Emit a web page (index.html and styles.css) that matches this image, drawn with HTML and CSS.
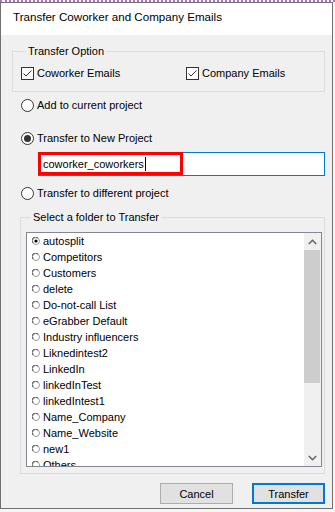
FILE: index.html
```html
<!DOCTYPE html>
<html>
<head>
	<meta charset="utf-8" />
	<title>Transfer Coworker and Company Emails</title>
	<link rel="stylesheet" href="styles.css">
</head>
<body>
<div class="window">
	<div class="titlebar">Transfer Coworker and Company Emails</div>
	<div class="content">
		<div class="group options">
			<div class="group-title">Transfer Option</div>
			<div class="check-row">
				<label class="check first">
					<svg class="box" width="13" height="13" viewBox="0 0 13 13"><rect x="0.5" y="0.5" width="12" height="12" fill="#fff" stroke="#333"/><path d="M2.5 6.5 L5 9 L10.5 3.5" fill="none" stroke="#333" stroke-width="1"/></svg>
					Coworker Emails
				</label>
				<label class="check">
					<svg class="box" width="13" height="13" viewBox="0 0 13 13"><rect x="0.5" y="0.5" width="12" height="12" fill="#fff" stroke="#333"/><path d="M2.5 6.5 L5 9 L10.5 3.5" fill="none" stroke="#333" stroke-width="1"/></svg>
					Company Emails
				</label>
			</div>
		</div>

		<div class="radio r-add">
			<svg width="13" height="13" viewBox="0 0 13 13"><circle cx="6.5" cy="6.5" r="6" fill="#fff" stroke="#333"/></svg>
			Add to current project
		</div>
		<div class="radio r-new">
			<svg width="13" height="13" viewBox="0 0 13 13"><circle cx="6.5" cy="6.5" r="6" fill="#fff" stroke="#333"/><circle cx="6.5" cy="6.5" r="3.5" fill="#333"/></svg>
			Transfer to New Project
		</div>
		<div class="textbox">
			<span class="value">coworker_coworkers</span><span class="caret"></span>
			<span class="mark"></span>
		</div>
		<div class="radio r-diff">
			<svg width="13" height="13" viewBox="0 0 13 13"><circle cx="6.5" cy="6.5" r="6" fill="#fff" stroke="#333"/></svg>
			Transfer to different project
		</div>

		<div class="group folders">
			<div class="group-title">Select a folder to Transfer</div>
			<div class="listbox">
				<ul class="items">
					<li><svg width="8" height="8" viewBox="0 0 8 8"><circle cx="4" cy="4" r="3.5" fill="#fff" stroke="#9a9a9a"/><path d="M1 6 A3.5 3.5 0 0 1 6 1" fill="none" stroke="#555"/><circle cx="4" cy="4" r="1.6" fill="#000"/></svg>autosplit</li>
					<li><svg width="8" height="8" viewBox="0 0 8 8"><circle cx="4" cy="4" r="3.5" fill="#fff" stroke="#9a9a9a"/><path d="M1 6 A3.5 3.5 0 0 1 6 1" fill="none" stroke="#555"/></svg>Competitors</li>
					<li><svg width="8" height="8" viewBox="0 0 8 8"><circle cx="4" cy="4" r="3.5" fill="#fff" stroke="#9a9a9a"/><path d="M1 6 A3.5 3.5 0 0 1 6 1" fill="none" stroke="#555"/></svg>Customers</li>
					<li><svg width="8" height="8" viewBox="0 0 8 8"><circle cx="4" cy="4" r="3.5" fill="#fff" stroke="#9a9a9a"/><path d="M1 6 A3.5 3.5 0 0 1 6 1" fill="none" stroke="#555"/></svg>delete</li>
					<li><svg width="8" height="8" viewBox="0 0 8 8"><circle cx="4" cy="4" r="3.5" fill="#fff" stroke="#9a9a9a"/><path d="M1 6 A3.5 3.5 0 0 1 6 1" fill="none" stroke="#555"/></svg>Do-not-call List</li>
					<li><svg width="8" height="8" viewBox="0 0 8 8"><circle cx="4" cy="4" r="3.5" fill="#fff" stroke="#9a9a9a"/><path d="M1 6 A3.5 3.5 0 0 1 6 1" fill="none" stroke="#555"/></svg>eGrabber Default</li>
					<li><svg width="8" height="8" viewBox="0 0 8 8"><circle cx="4" cy="4" r="3.5" fill="#fff" stroke="#9a9a9a"/><path d="M1 6 A3.5 3.5 0 0 1 6 1" fill="none" stroke="#555"/></svg>Industry influencers</li>
					<li><svg width="8" height="8" viewBox="0 0 8 8"><circle cx="4" cy="4" r="3.5" fill="#fff" stroke="#9a9a9a"/><path d="M1 6 A3.5 3.5 0 0 1 6 1" fill="none" stroke="#555"/></svg>Liknedintest2</li>
					<li><svg width="8" height="8" viewBox="0 0 8 8"><circle cx="4" cy="4" r="3.5" fill="#fff" stroke="#9a9a9a"/><path d="M1 6 A3.5 3.5 0 0 1 6 1" fill="none" stroke="#555"/></svg>LinkedIn</li>
					<li><svg width="8" height="8" viewBox="0 0 8 8"><circle cx="4" cy="4" r="3.5" fill="#fff" stroke="#9a9a9a"/><path d="M1 6 A3.5 3.5 0 0 1 6 1" fill="none" stroke="#555"/></svg>linkedInTest</li>
					<li><svg width="8" height="8" viewBox="0 0 8 8"><circle cx="4" cy="4" r="3.5" fill="#fff" stroke="#9a9a9a"/><path d="M1 6 A3.5 3.5 0 0 1 6 1" fill="none" stroke="#555"/></svg>linkedIntest1</li>
					<li><svg width="8" height="8" viewBox="0 0 8 8"><circle cx="4" cy="4" r="3.5" fill="#fff" stroke="#9a9a9a"/><path d="M1 6 A3.5 3.5 0 0 1 6 1" fill="none" stroke="#555"/></svg>Name_Company</li>
					<li><svg width="8" height="8" viewBox="0 0 8 8"><circle cx="4" cy="4" r="3.5" fill="#fff" stroke="#9a9a9a"/><path d="M1 6 A3.5 3.5 0 0 1 6 1" fill="none" stroke="#555"/></svg>Name_Website</li>
					<li><svg width="8" height="8" viewBox="0 0 8 8"><circle cx="4" cy="4" r="3.5" fill="#fff" stroke="#9a9a9a"/><path d="M1 6 A3.5 3.5 0 0 1 6 1" fill="none" stroke="#555"/></svg>new1</li>
					<li><svg width="8" height="8" viewBox="0 0 8 8"><circle cx="4" cy="4" r="3.5" fill="#fff" stroke="#9a9a9a"/><path d="M1 6 A3.5 3.5 0 0 1 6 1" fill="none" stroke="#555"/></svg>Others</li>
				</ul>
				<div class="scrollbar">
					<div class="arrow"><svg width="9" height="6" viewBox="0 0 9 6"><path d="M0.8 5 L4.5 1.3 L8.2 5" fill="none" stroke="#606060" stroke-width="1.4"/></svg></div>
					<div class="track"><div class="thumb"></div></div>
					<div class="arrow"><svg width="9" height="6" viewBox="0 0 9 6"><path d="M0.8 1 L4.5 4.7 L8.2 1" fill="none" stroke="#606060" stroke-width="1.4"/></svg></div>
				</div>
			</div>
		</div>

		<div class="buttons">
			<button class="btn">Cancel</button>
			<button class="btn default">Transfer</button>
		</div>
	</div>
</div>
</body>
</html>
```
FILE: styles.css
```css
*{
margin:0;
padding:0;
box-sizing:border-box;
}
body{
background:#f6f6f6;
border-top:2px dotted #b070c0;
font-family:"Liberation Sans", Arial, sans-serif;
font-size:11px;
color:#000;
}
.window{
width:333px;
height:507px;
border:1px solid #707070;
background:#f0f0f0;
}
.titlebar{
height:32px;
background:#fff;
padding:5px 0 0 12px;
line-height:18px;
font-size:11.6px;
}
.content{
padding:0 7px 0 11px;
}

/* group boxes */
.group{
border:1px solid #dcdcdc;
}
.group-title{
display:table;
margin:-9px 0 0 5px;
padding:0 2px;
line-height:16px;
background:#f0f0f0;
}
.options{
margin-top:16px;
padding:0 0 10px 8px;
}
.check-row{
display:flex;
align-items:center;
height:16px;
margin-top:6px;
}
.check{
display:flex;
align-items:center;
gap:3px;
}
.check.first{
width:165px;
}

/* radios */
.radio{
display:flex;
align-items:center;
gap:3px;
height:16px;
margin-left:9px;
}
.r-add{ margin-top:5px; }
.r-new{ margin-top:17px; }
.r-diff{ margin-top:9px; }

.textbox{
position:relative;
height:24px;
margin:6px 0 0 26px;
border:1px solid #0078d7;
background:#fff;
padding-left:4px;
display:flex;
align-items:center;
}
.caret{
display:inline-block;
width:1px;
height:14px;
background:#000;
margin-left:1px;
}
.mark{
position:absolute;
left:-1px;
top:-1px;
width:145px;
height:23px;
border:3px solid #f00;
}

/* folder list */
.folders{
margin:16px 0 0 8px;
padding:0 2px 6px 5px;
}
.listbox{
margin-top:7px;
height:235px;
border:1px solid #828790;
background:#fff;
display:flex;
}
.items{
flex:1;
list-style:none;
overflow:hidden;
}
.items li{
height:16px;
display:flex;
align-items:center;
gap:3px;
padding-left:5px;
white-space:nowrap;
}
.scrollbar{
width:17px;
background:#f0f0f0;
display:flex;
flex-direction:column;
}
.arrow{
height:17px;
display:flex;
align-items:center;
justify-content:center;
}
.track{
flex:1;
}
.thumb{
height:133px;
margin-right:1px;
background:#cdcdcd;
}

/* buttons */
.buttons{
display:flex;
justify-content:flex-end;
gap:19px;
margin-top:9px;
}
.btn{
width:73px;
height:21px;
border:1px solid #adadad;
background:#e1e1e1;
font-family:"Liberation Sans", Arial, sans-serif;
font-size:11px;
color:#000;
}
.btn.default{
border:2px solid #0078d7;
}
```
